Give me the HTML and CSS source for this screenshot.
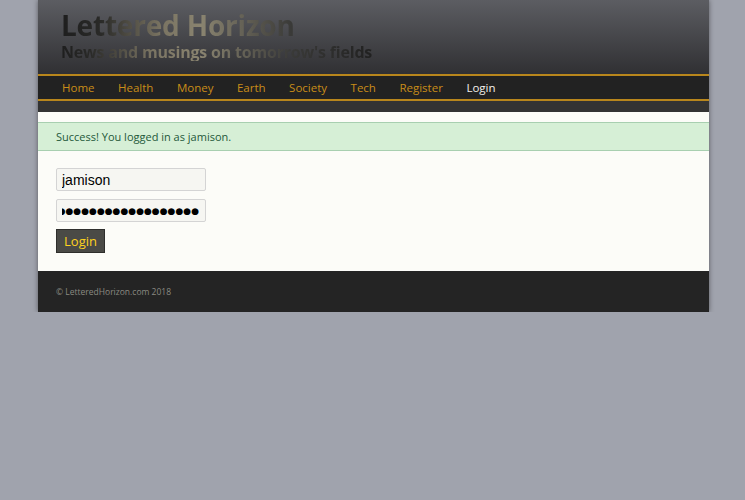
FILE: index.html
```html
<!DOCTYPE html>
<html>
<head>
<meta charset="utf-8">
<link rel="stylesheet" href="styles.css">
</head>
<body>
<div class="page">
  <header class="masthead">
    <h1 class="title">Lettered Horizon</h1>
    <p class="tagline">News and musings on tomorrow's fields</p>
  </header>
  <nav class="nav">
    <a href="#">Home</a>
    <a href="#">Health</a>
    <a href="#">Money</a>
    <a href="#">Earth</a>
    <a href="#">Society</a>
    <a href="#">Tech</a>
    <a href="#">Register</a>
    <a href="#" class="active">Login</a>
  </nav>
  <div class="navband"></div>
  <main class="content">
    <div class="alert">Success! You logged in as jamison.</div>
    <form class="form">
      <input class="field" type="text" value="jamison">
      <input class="field pw" type="text" value="●●●●●●●●●●●●●●●●●●●●●●">
      <button class="btn" type="button">Login</button>
    </form>
  </main>
  <footer class="footer">© LetteredHorizon.com 2018</footer>
</div>
</body>
</html>
```
FILE: styles.css
```css
html, body { margin: 0; padding: 0; }
body {
  background: #a0a3ad;
  font-family: "Open Sans", "DejaVu Sans", sans-serif;
}
.page {
  width: 671px;
  margin-left: 38px;
  box-shadow: 0 0 5px rgba(0,0,0,0.45);
}
.masthead {
  height: 76px;
  box-sizing: border-box;
  padding: 10px 0 0 23px;
  display: flex;
  flex-direction: column;
  align-items: flex-start;
  background: linear-gradient(#5c5d62, #303033);
  border-bottom: 2px solid #b8861c;
}
.title {
  margin: 0;
  font-size: 28px;
  font-weight: 700;
  line-height: 30px;
  letter-spacing: -0.2px;
  background: linear-gradient(90deg, #1e1e1e 0px, #2a2a28 40px, #7a7462 100px, #8a8470 140px, #3a3a38 230px);
  -webkit-background-clip: text;
  background-clip: text;
  color: transparent;
}
.tagline {
  margin: 3px 0 0;
  font-size: 16px;
  font-weight: 700;
  line-height: 18px;
  letter-spacing: -0.2px;
  background: linear-gradient(90deg, #1e1e1e 0px, #2a2a28 30px, #7a7462 90px, #8a8470 140px, #3a3a38 230px, #1e1e1e 320px);
  -webkit-background-clip: text;
  background-clip: text;
  color: transparent;
}
.nav {
  display: flex;
  height: 23px;
  align-items: center;
  padding-left: 24px;
  background: #222222;
  border-bottom: 2px solid #b8861c;
}
.nav a {
  color: #c98d18;
  text-decoration: none;
  font-size: 11.5px;
  margin-right: 23.5px;
}
.nav a.active { color: #f2f0ea; }
.navband {
  height: 11px;
  background: #333333;
}
.content {
  background: #fcfcf8;
  padding: 10px 0 18px;
}
.alert {
  background: #d6efd6;
  border-top: 1px solid #a8cfb0;
  border-bottom: 1px solid #a8cfb0;
  color: #24583a;
  font-size: 11px;
  padding: 0 18px;
  height: 27px;
  line-height: 27px;
}
.form {
  display: flex;
  flex-direction: column;
  align-items: flex-start;
  padding: 17px 0 0 18px;
}
.field {
  width: 150px;
  height: 23px;
  box-sizing: border-box;
  border: 1px solid #d4d4d4;
  border-radius: 2px;
  background: #f6f6f2;
  font-family: "Liberation Sans", Arial, sans-serif;
  font-size: 14px;
  padding: 0 5px;
  margin-bottom: 8px;
  color: #000;
}
.field.pw {
  font-family: "DejaVu Sans", sans-serif;
  font-size: 9px;
  direction: rtl;
  padding: 0 6px 0 5px;
  margin-bottom: 7px;
}
.btn {
  width: 49px;
  height: 24px;
  background: #4a4a46;
  border: 1px solid #2e2e2c;
  color: #ffd21e;
  font-family: "Open Sans", "DejaVu Sans", sans-serif;
  font-size: 13px;
  padding: 0;
}
.footer {
  background: #242424;
  color: #8a8a82;
  font-size: 8.5px;
  height: 41px;
  line-height: 41px;
  padding-left: 18px;
}
```
